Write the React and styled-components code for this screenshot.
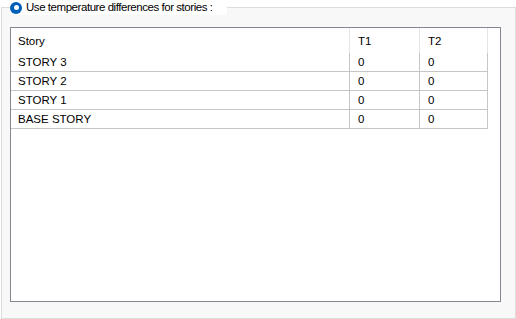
import React from "react";
import styled, { createGlobalStyle } from "styled-components";

const Global = createGlobalStyle`
  html, body { margin: 0; padding: 0; background: #ffffff; }
  body { font-family: "Liberation Sans", Arial, sans-serif; font-size: 11px; color: #000; }
  * { box-sizing: border-box; }
`;

const Group = styled.fieldset`
  margin: 0 0 0 1px;
  width: 515px;
  height: 319px;
  padding: 0 14px 16px 8px;
  border: 1px solid #dcdcdc;
  background: #f8f8f8;
  min-width: 0;
`;

const Legend = styled.legend`
  margin-left: 0;
  padding: 0 14px 0 0;
  height: 15px;
  display: flex;
  align-items: center;
  gap: 4px;
  background: #ffffff;
  font-size: 11.5px;
  line-height: 15px;
  white-space: nowrap;
`;

const LegendText = styled.span`
  letter-spacing: -0.45px;
`;

const Radio = styled.span`
  width: 12px;
  height: 12px;
  border-radius: 50%;
  background: #005fb8;
  display: flex;
  align-items: center;
  justify-content: center;
  flex: none;
  &::after {
    content: "";
    width: 5px;
    height: 5px;
    border-radius: 50%;
    background: #ffffff;
  }
`;

const Grid = styled.div`
  margin-top: 12px;
  height: 275px;
  border: 1px solid #828790;
  background: #ffffff;
  display: flex;
  flex-direction: column;
`;

const Row = styled.div`
  display: grid;
  grid-template-columns: 339px 70px 68px;
  height: ${(p) => (p.$header ? 25 : 19)}px;
`;

const Cell = styled.div`
  padding-left: ${(p) => (p.$first ? 7 : 8)}px;
  display: flex;
  align-items: center;
  border-right: 1px solid ${(p) => (p.$header ? "#e5e5e5" : "#c6c6c6")};
  border-bottom: ${(p) => (p.$header ? "none" : "1px solid #c6c6c6")};
  white-space: nowrap;
  font-size: 11.5px;
  padding-top: ${(p) => (p.$header ? 1 : 0)}px;
`;

const rows = ["STORY 3", "STORY 2", "STORY 1", "BASE STORY"];

export default function App() {
  return (
    <>
      <Global />
      <Group>
        <Legend>
          <Radio />
          <LegendText>Use temperature differences for stories :</LegendText>
        </Legend>
        <Grid>
          <Row $header>
            <Cell $header $first>Story</Cell>
            <Cell $header>T1</Cell>
            <Cell $header>T2</Cell>
          </Row>
          {rows.map((r) => (
            <Row key={r}>
              <Cell $first>{r}</Cell>
              <Cell>0</Cell>
              <Cell>0</Cell>
            </Row>
          ))}
        </Grid>
      </Group>
    </>
  );
}
